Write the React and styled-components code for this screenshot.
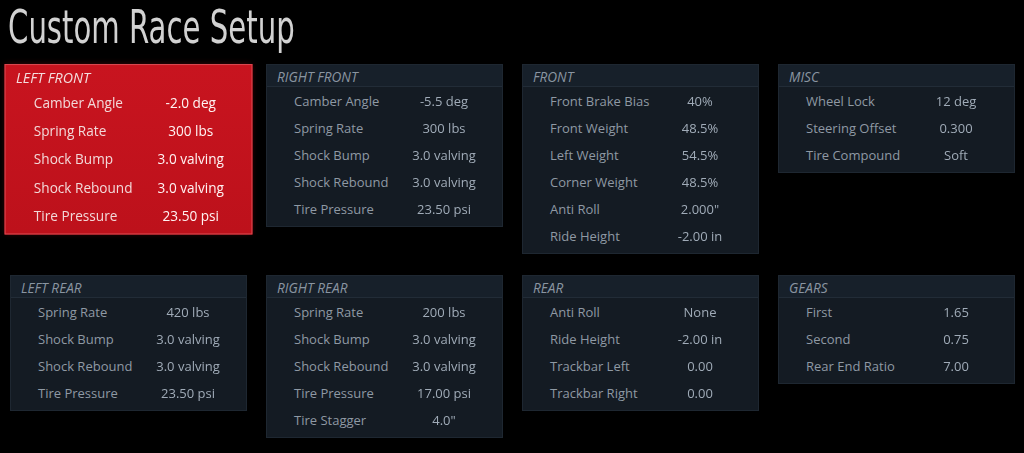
import styled, { createGlobalStyle } from "styled-components";

const GlobalStyle = createGlobalStyle`
  html, body {
    margin: 0;
    padding: 0;
    background-color: #000000;
  }
  body {
    font-family: "Open Sans", "Noto Sans", sans-serif;
  }
`;

const panels = [
  {
    title: "LEFT FRONT",
    active: true,
    rows: [
      ["Camber Angle", "-2.0 deg"],
      ["Spring Rate", "300 lbs"],
      ["Shock Bump", "3.0 valving"],
      ["Shock Rebound", "3.0 valving"],
      ["Tire Pressure", "23.50 psi"],
    ],
  },
  {
    title: "RIGHT FRONT",
    rows: [
      ["Camber Angle", "-5.5 deg"],
      ["Spring Rate", "300 lbs"],
      ["Shock Bump", "3.0 valving"],
      ["Shock Rebound", "3.0 valving"],
      ["Tire Pressure", "23.50 psi"],
    ],
  },
  {
    title: "FRONT",
    rows: [
      ["Front Brake Bias", "40%"],
      ["Front Weight", "48.5%"],
      ["Left Weight", "54.5%"],
      ["Corner Weight", "48.5%"],
      ["Anti Roll", "2.000\""],
      ["Ride Height", "-2.00 in"],
    ],
  },
  {
    title: "MISC",
    rows: [
      ["Wheel Lock", "12 deg"],
      ["Steering Offset", "0.300"],
      ["Tire Compound", "Soft"],
    ],
  },
  {
    title: "LEFT REAR",
    rows: [
      ["Spring Rate", "420 lbs"],
      ["Shock Bump", "3.0 valving"],
      ["Shock Rebound", "3.0 valving"],
      ["Tire Pressure", "23.50 psi"],
    ],
  },
  {
    title: "RIGHT REAR",
    rows: [
      ["Spring Rate", "200 lbs"],
      ["Shock Bump", "3.0 valving"],
      ["Shock Rebound", "3.0 valving"],
      ["Tire Pressure", "17.00 psi"],
      ["Tire Stagger", "4.0\""],
    ],
  },
  {
    title: "REAR",
    rows: [
      ["Anti Roll", "None"],
      ["Ride Height", "-2.00 in"],
      ["Trackbar Left", "0.00"],
      ["Trackbar Right", "0.00"],
    ],
  },
  {
    title: "GEARS",
    rows: [
      ["First", "1.65"],
      ["Second", "0.75"],
      ["Rear End Ratio", "7.00"],
    ],
  },
];

export default function App() {
  return (
    <Page>
      <GlobalStyle />
      <Title>Custom Race Setup</Title>
      <Grid>
        {panels.map((panel) => (
          <Panel key={panel.title} $active={panel.active}>
            <PanelHeader $active={panel.active}>{panel.title}</PanelHeader>
            <Rows>
              {panel.rows.map(([label, value]) => (
                <Row key={label} $active={panel.active}>
                  <Label>{label}</Label>
                  <Value>{value}</Value>
                </Row>
              ))}
            </Rows>
          </Panel>
        ))}
      </Grid>
    </Page>
  );
}

const Page = styled.div`
  width: 1024px;
  height: 453px;
  background-color: #000000;
  overflow: hidden;
  box-sizing: border-box;
  padding: 0 9px 0 10px;
`;

const Title = styled.h1`
  margin: 0;
  height: 59px;
  padding-top: 2px;
  margin-left: -2px;
  font-family: "Liberation Sans Narrow", "DejaVu Sans Condensed", sans-serif;
  font-weight: 400;
  font-size: 46px;
  line-height: 50px;
  color: #d2d2d2;
  white-space: nowrap;
  transform: scaleX(0.705);
  transform-origin: left top;
  box-sizing: border-box;
`;

const Grid = styled.div`
  margin-top: 5px;
  display: grid;
  grid-template-columns: repeat(4, 237px);
  column-gap: 19px;
  row-gap: 21px;
  align-items: start;
`;

const Panel = styled.div`
  background-color: ${(p) => (p.$active ? "#c4121d" : "#141b23")};
  background-image: ${(p) =>
    p.$active
      ? "linear-gradient(180deg, #c8141f 0%, #bd111b 100%)"
      : "none"};
  border: 1px solid ${(p) => (p.$active ? "#d9474f" : "#1e2731")};
  box-shadow: ${(p) => (p.$active ? "0 0 6px rgba(200, 20, 30, 0.35)" : "none")};
  transform: ${(p) => (p.$active ? "scale(1.046)" : "none")};
  transform-origin: center top;
  padding-bottom: 4px;
`;

const PanelHeader = styled.div`
  height: 21px;
  padding-left: 10px;
  font-size: 13.6px;
  font-style: italic;
  line-height: 23px;
  color: ${(p) => (p.$active ? "#f4dede" : "#8a95a1")};
  background-color: ${(p) => (p.$active ? "transparent" : "#17202a")};
  border-bottom: 1px solid ${(p) => (p.$active ? "transparent" : "#222c37")};
`;

const Rows = styled.div`
  display: flex;
  flex-direction: column;
`;

const Row = styled.div`
  height: 27px;
  display: grid;
  grid-template-columns: 27px 1fr 100px 8px;
  align-items: center;
  font-size: 13px;
  color: ${(p) => (p.$active ? "#f2d9d9" : "#8f99a4")};
  &::before {
    content: "";
  }
`;

const Label = styled.span`
  white-space: nowrap;
`;

const Value = styled.span`
  text-align: center;
  white-space: nowrap;
  color: inherit;
  filter: brightness(1.12);
`;
